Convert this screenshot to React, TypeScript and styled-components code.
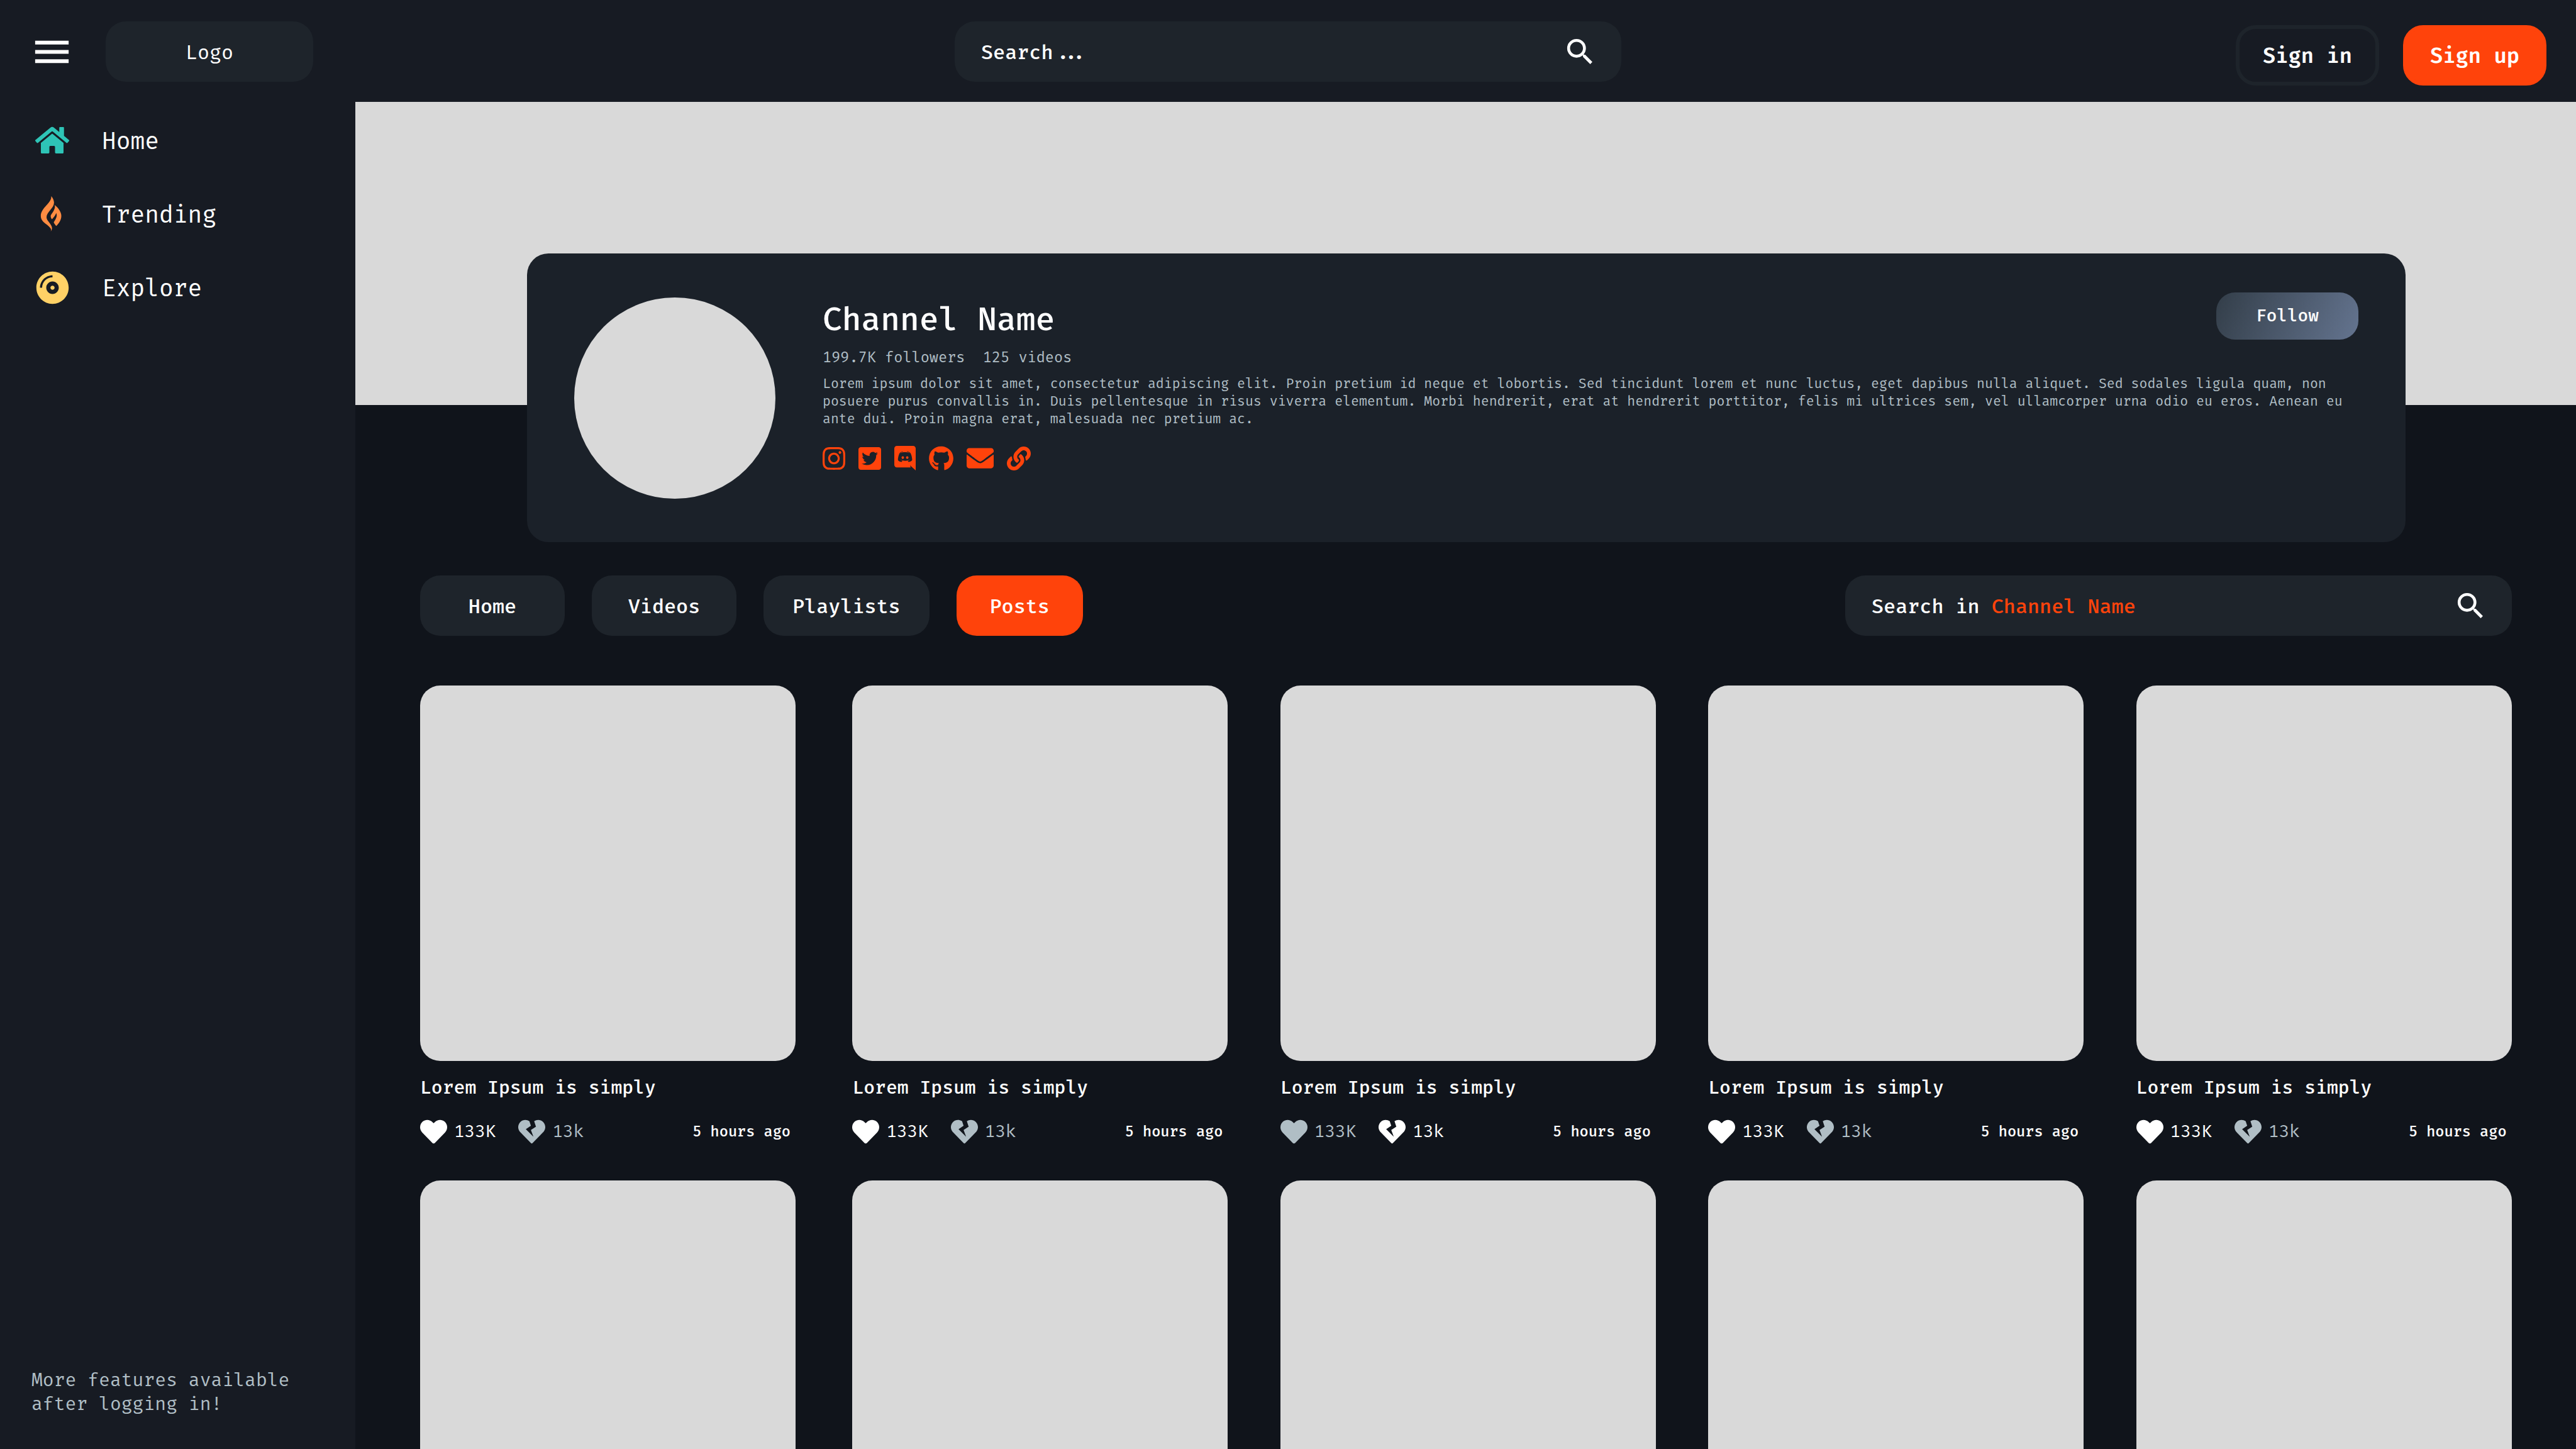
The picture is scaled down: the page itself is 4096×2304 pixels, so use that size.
import React from "react";
import styled, { createGlobalStyle, css } from "styled-components";
import {
  FaCompactDisc,
  FaEnvelope,
  FaGithub,
  FaGripfire,
  FaHeart,
  FaHeartBroken,
  FaHome,
  FaInstagram,
  FaLink,
  FaTwitterSquare,
} from "react-icons/fa";
import { MdMenu, MdSearch } from "react-icons/md";

const color = {
  page: "#10141b",
  bar: "#171b23",
  field: "#1e242b",
  card: "#1b2129",
  blank: "#d9d9d9",
  accent: "#ff430b",
  text: "#ffffff",
  muted: "#b0bec5",
};

const size = { xs: "21px", sm: "23px", md: "27px", base: "29px", lg: "31px", xl: "33px", nav: "37px", title: "50px" };

const GlobalStyle = createGlobalStyle`
  *, *::before, *::after { box-sizing: border-box; }
  body {
    margin: 0;
    background: ${color.page};
    color: ${color.text};
    font-family: "Fira Code", "Fira Mono", "DejaVu Sans Mono", monospace;
    font-size: ${size.lg};
  }
  button, input { font: inherit; color: inherit; }
  button { border: 0; padding: 0; background: none; cursor: pointer; }
  a { color: inherit; text-decoration: none; }
  h1, h2, p, ul { margin: 0; padding: 0; }
  ul { list-style: none; }
  svg { display: block; flex: none; }
`;

const Shell = styled.div`
  display: grid;
  grid-template: auto minmax(0, 1fr) / 565px minmax(0, 1fr);
  height: 100vh;
  overflow: hidden;
`;

const Header = styled.header`
  grid-column: 1 / -1;
  display: grid;
  grid-template-columns: 1fr minmax(0, 1060px) 1fr;
  align-items: start;
  padding: 34px 47px 26px;
  background: ${color.bar};
`;

const Brand = styled.div`
  display: flex;
  align-items: center;
  gap: 50px;
`;

const MenuButton = styled.button`
  font-size: 71px;
`;

const field = css`
  height: 96px;
  border-radius: 32px;
  background: ${color.field};
`;

const Logo = styled.a`
  ${field}
  display: flex;
  align-items: center;
  justify-content: center;
  width: 330px;
  padding-top: 4px;
`;

const SearchBox = styled.form`
  ${field}
  display: flex;
  align-items: center;
  padding: 0 38px 0 42px;
  font-weight: 500;
`;

const SearchLabel = styled.label`
  padding-top: 4px;
`;

const SearchInput = styled.input`
  flex: 1;
  min-width: 0;
  border: 0;
  padding: 4px 0 0;
  outline: 0;
  background: transparent;
  &::placeholder { color: ${color.text}; opacity: 1; }
`;

const SearchButton = styled.button`
  font-size: 55px;
`;

const Accent = styled.span`
  color: ${color.accent};
`;

const Auth = styled.div`
  display: flex;
  justify-content: flex-end;
  gap: 38px;
  padding-top: 6px;
`;

const AuthButton = styled.button<{ $filled?: boolean }>`
  width: 228px;
  height: 96px;
  padding-top: 4px;
  border: 6px solid ${(p) => (p.$filled ? color.accent : color.field)};
  border-radius: 32px;
  background: ${(p) => (p.$filled ? color.accent : "transparent")};
  font-size: ${size.xl};
  font-weight: 600;
`;

const Sidebar = styled.aside`
  display: flex;
  flex-direction: column;
  justify-content: space-between;
  padding: 38px 50px 52px;
  background: ${color.bar};
`;

const NavList = styled.ul`
  display: grid;
  gap: 71px;
`;

const NavLink = styled.a<{ $tint: string; $icon: number }>`
  display: grid;
  grid-template: 46px / 66px 1fr;
  align-items: center;
  gap: 46px;
  font-size: ${size.nav};
  svg {
    justify-self: center;
    width: ${(p) => p.$icon}px;
    height: ${(p) => p.$icon}px;
    color: ${(p) => p.$tint};
  }
`;

const NavLabel = styled.span`
  padding-top: 4px;
`;

const SidebarNote = styled.p`
  max-width: 24ch;
  color: ${color.muted};
  font-size: ${size.base};
  line-height: 38px;
`;

const Main = styled.main`
  overflow-y: auto;
  scrollbar-width: none;
`;

const Banner = styled.div`
  height: 482px;
  background: ${color.blank};
`;

const Profile = styled.section`
  position: relative;
  display: grid;
  grid-template-columns: 320px minmax(0, 1fr);
  gap: 75px;
  margin: -241px 271px 0 273px;
  padding: 62px 75px 69px;
  border-radius: 34px;
  background: ${color.card};
`;

const Avatar = styled.div`
  width: 320px;
  height: 320px;
  margin-top: 8px;
  border-radius: 50%;
  background: ${color.blank};
`;

const ProfileTop = styled.div`
  display: flex;
  align-items: flex-end;
  justify-content: space-between;
`;

const ChannelName = styled.h1`
  font-size: ${size.title};
  font-weight: 500;
  line-height: 60px;
`;

const FollowButton = styled.button`
  width: 226px;
  height: 75px;
  border-radius: 30px;
  background: linear-gradient(113deg, #333e49 0%, #64748f 100%);
  font-size: ${size.md};
  font-weight: 500;
`;

const Counts = styled.p`
  display: flex;
  gap: 2ch;
  margin-top: 14px;
  color: ${color.muted};
  font-size: ${size.sm};
  line-height: 30px;
`;

const About = styled.p`
  max-width: 189ch;
  margin-top: 13px;
  color: ${color.muted};
  font-size: ${size.xs};
  line-height: 28px;
`;

const Socials = styled.ul`
  display: flex;
  align-items: center;
  gap: 21px;
  height: 43px;
  margin-top: 26px;
  color: ${color.accent};
`;

const SocialLink = styled.a<{ $w: number; $h: number }>`
  display: block;
  svg {
    width: ${(p) => p.$w}px;
    height: ${(p) => p.$h}px;
  }
`;

const Content = styled.div`
  padding: 53px 102px 0 103px;
`;

const Toolbar = styled.div`
  display: grid;
  grid-template-columns: 1fr minmax(0, 1060px);
  align-items: center;
`;

const Tabs = styled.nav`
  display: flex;
  gap: 43px;
`;

const Tab = styled.button<{ $active?: boolean }>`
  ${field}
  min-width: 230px;
  padding: 4px 46px 0;
  font-weight: 500;
  ${(p) => p.$active && css`
    min-width: 201px;
    background: ${color.accent};
  `}
`;

const Posts = styled.ul`
  display: grid;
  grid-template-columns: minmax(0, 604fr) repeat(4, minmax(0, 597fr));
  gap: 56px 83px;
  margin-top: 79px;
`;

const Post = styled.li`
  max-width: 597px;
`;

const Thumb = styled.a`
  display: block;
  aspect-ratio: 1;
  border-radius: 32px;
  background: ${color.blank};
`;

const PostTitle = styled.h2`
  margin-top: 24px;
  font-size: ${size.base};
  font-weight: 500;
  line-height: 38px;
`;

const PostMeta = styled.div`
  display: flex;
  align-items: center;
  gap: 36px;
  margin-top: 29px;
  padding-right: 8px;
`;

const Vote = styled.button<{ $on?: boolean }>`
  display: flex;
  align-items: center;
  gap: 11px;
  color: ${(p) => (p.$on ? color.text : color.muted)};
  font-size: ${size.md};
  svg { width: 43px; height: 43px; }
`;

const Age = styled.time`
  margin-left: auto;
  font-size: ${size.sm};
  font-weight: 500;
`;

function DiscordBubble() {
  return (
    <svg viewBox="0 0 448 512" fill="currentColor">
      <path d="M297.216 243.2c0 15.616-11.52 28.16-26.112 28.16-14.336 0-26.112-12.544-26.112-28.16s11.52-28.16 26.112-28.16c14.592 0 26.112 12.544 26.112 28.16zm-119.552-28.16c-14.592 0-26.112 12.544-26.112 28.16s11.776 28.16 26.112 28.16c14.592 0 26.112-12.544 26.112-28.16.256-15.616-11.52-28.16-26.112-28.16zM448 52.736V512c-64.494-56.994-43.868-38.128-118.784-107.776l13.568 47.36H52.48C23.552 451.584 0 428.032 0 398.848V52.736C0 23.552 23.552 0 52.48 0h343.04C424.448 0 448 23.552 448 52.736zm-72.96 242.688c0-82.432-36.864-149.248-36.864-149.248-36.864-27.648-71.936-26.88-71.936-26.88l-3.584 4.096c43.52 13.312 63.744 32.512 63.744 32.512-60.811-33.329-132.244-33.335-191.232-7.424-9.472 4.352-15.104 7.424-15.104 7.424s21.248-20.224 67.328-33.536l-2.56-3.072s-35.072-.768-71.936 26.88c0 0-36.864 66.816-36.864 149.248 0 0 21.504 37.12 78.08 38.912 0 0 9.472-11.52 17.152-21.248-32.512-9.728-44.8-30.208-44.8-30.208 3.766 2.636 9.976 6.053 10.496 6.4 43.21 24.198 104.588 32.126 159.744 8.96 8.96-3.328 18.944-8.192 29.44-15.104 0 0-12.8 20.992-46.336 30.464 7.68 9.728 16.896 20.736 16.896 20.736 56.576-1.792 78.336-38.912 78.336-38.912z" />
    </svg>
  );
}

const navItems = [
  { label: "Home", Icon: FaHome, tint: "#2ec4b6", icon: 54 },
  { label: "Trending", Icon: FaGripfire, tint: "#ff8c42", icon: 58 },
  { label: "Explore", Icon: FaCompactDisc, tint: "#ffd166", icon: 53 },
];

const socials = [
  { label: "Instagram", Icon: FaInstagram, w: 36, h: 42 },
  { label: "Twitter", Icon: FaTwitterSquare, w: 36, h: 42 },
  { label: "Discord", Icon: DiscordBubble, w: 34, h: 39 },
  { label: "GitHub", Icon: FaGithub, w: 39, h: 40 },
  { label: "Email", Icon: FaEnvelope, w: 43, h: 43 },
  { label: "Website", Icon: FaLink, w: 38, h: 38 },
];

const tabs = ["Home", "Videos", "Playlists", "Posts"];

const posts = ["up", "up", "down", "up", "up"].map((vote, id) => ({
  id,
  title: "Lorem Ipsum is simply",
  likes: "133K",
  dislikes: "13k",
  age: "5 hours ago",
  vote,
}));

// Posts of the next page, shown as blanks until their details arrive.
const pending = [5, 6, 7, 8, 9];

export default function App() {
  return (
    <>
      <GlobalStyle />
      <Shell>
        <Header>
          <Brand>
            <MenuButton type="button" aria-label="Menu"><MdMenu /></MenuButton>
            <Logo href="#">Logo</Logo>
          </Brand>
          <SearchBox role="search">
            <SearchInput type="text" aria-label="Search" placeholder="Search..." />
            <SearchButton type="button" aria-label="Search"><MdSearch /></SearchButton>
          </SearchBox>
          <Auth>
            <AuthButton type="button">Sign in</AuthButton>
            <AuthButton type="button" $filled>Sign up</AuthButton>
          </Auth>
        </Header>

        <Sidebar>
          <nav>
            <NavList>
              {navItems.map(({ label, Icon, tint, icon }) => (
                <li key={label}>
                  <NavLink href="#" $tint={tint} $icon={icon}>
                    <Icon />
                    <NavLabel>{label}</NavLabel>
                  </NavLink>
                </li>
              ))}
            </NavList>
          </nav>
          <SidebarNote>More features available after logging in!</SidebarNote>
        </Sidebar>

        <Main>
          <Banner />
          <Profile>
            <Avatar />
            <div>
              <ProfileTop>
                <ChannelName>Channel Name</ChannelName>
                <FollowButton type="button">Follow</FollowButton>
              </ProfileTop>
              <Counts>
                <span>199.7K followers</span>
                <span>125 videos</span>
              </Counts>
              <About>
                Lorem ipsum dolor sit amet, consectetur adipiscing elit. Proin pretium id neque et lobortis. Sed
                tincidunt lorem et nunc luctus, eget dapibus nulla aliquet. Sed sodales ligula quam, non posuere purus
                convallis in. Duis pellentesque in risus viverra elementum. Morbi hendrerit, erat at hendrerit
                porttitor, felis mi ultrices sem, vel ullamcorper urna odio eu eros. Aenean eu ante dui. Proin magna
                erat, malesuada nec pretium ac.
              </About>
              <Socials>
                {socials.map(({ label, Icon, w, h }) => (
                  <li key={label}>
                    <SocialLink href="#" aria-label={label} $w={w} $h={h}><Icon /></SocialLink>
                  </li>
                ))}
              </Socials>
            </div>
          </Profile>

          <Content>
            <Toolbar>
              <Tabs>
                {tabs.map((tab) => (
                  <Tab key={tab} type="button" $active={tab === "Posts"}>{tab}</Tab>
                ))}
              </Tabs>
              <SearchBox role="search">
                <SearchLabel htmlFor="channel-search">Search in <Accent>Channel Name</Accent></SearchLabel>
                <SearchInput id="channel-search" type="text" />
                <SearchButton type="button" aria-label="Search channel"><MdSearch /></SearchButton>
              </SearchBox>
            </Toolbar>

            <Posts>
              {posts.map((post) => (
                <Post key={post.id}>
                  <Thumb href="#" aria-label={post.title} />
                  <PostTitle>{post.title}</PostTitle>
                  <PostMeta>
                    <Vote type="button" aria-label="Like" $on={post.vote === "up"}>
                      <FaHeart />
                      {post.likes}
                    </Vote>
                    <Vote type="button" aria-label="Dislike" $on={post.vote === "down"}>
                      <FaHeartBroken />
                      {post.dislikes}
                    </Vote>
                    <Age>{post.age}</Age>
                  </PostMeta>
                </Post>
              ))}
              {pending.map((id) => (
                <Post key={id}>
                  <Thumb as="div" />
                </Post>
              ))}
            </Posts>
          </Content>
        </Main>
      </Shell>
    </>
  );
}
